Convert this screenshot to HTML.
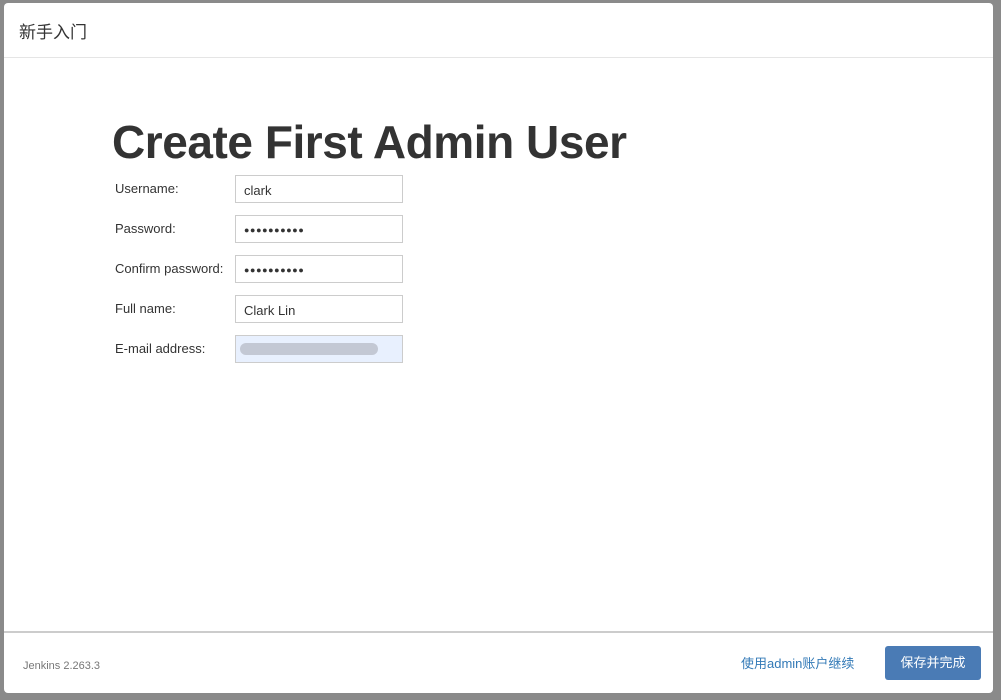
<!DOCTYPE html>
<html><head><meta charset="utf-8"><style>
html,body{margin:0;padding:0;width:1001px;height:700px;overflow:hidden;background:#8a8a8a;font-family:"Liberation Sans","Noto Sans CJK SC",sans-serif;}
.modal{position:absolute;left:4px;top:3px;width:989px;height:690px;background:#fff;border-radius:4px;}
.hdr{position:absolute;left:0;top:0;width:989px;height:54px;border-bottom:1px solid #e5e5e5;}
.hdr span{position:absolute;left:15px;top:15px;font-size:17px;color:#333;}
h1{position:absolute;left:108px;top:112px;margin:0;font-size:46px;font-weight:bold;color:#333;letter-spacing:-0.45px;white-space:nowrap;}
.lbl{position:absolute;left:111px;font-size:13px;color:#333;}
.inp{position:absolute;left:231px;width:168px;height:28px;border:1px solid #ccc;box-sizing:border-box;font-size:13px;color:#333;padding:7px 0 0 8px;}
.pw{font-size:9px;letter-spacing:0.6px;padding-top:9px;}
.foot{position:absolute;left:0;top:628px;width:989px;height:62px;border-top:2px solid #ccc;}
.ver{position:absolute;left:19px;top:27px;font-size:11px;color:#777;}
.lnk{position:absolute;left:737px;top:20px;font-size:13px;color:#337ab7;}
.btn{position:absolute;left:881px;top:13px;width:96px;height:34px;background:#4a7bb5;border-radius:3px;color:#fff;font-size:13px;text-align:center;line-height:34px;}
</style></head><body>
<div class="modal">
<div class="hdr"><span>新手入门</span></div>
<h1>Create First Admin User</h1>
<div class="lbl" style="top:178px">Username:</div><div class="inp" style="top:172px">clark</div>
<div class="lbl" style="top:218px">Password:</div><div class="inp pw" style="top:212px">●●●●●●●●●●</div>
<div class="lbl" style="top:258px">Confirm password:</div><div class="inp pw" style="top:252px">●●●●●●●●●●</div>
<div class="lbl" style="top:298px">Full name:</div><div class="inp" style="top:292px">Clark Lin</div>
<div class="lbl" style="top:338px">E-mail address:</div><div class="inp" style="top:332px;background:#e8f0fe;padding:0">
<div style="position:absolute;left:4px;top:7px;width:138px;height:12px;background:#c3c8d4;border-radius:6px"></div></div>
<div class="foot"><span class="ver">Jenkins 2.263.3</span><span class="lnk">使用admin账户继续</span><div class="btn">保存并完成</div></div>
</div>
</body></html>
